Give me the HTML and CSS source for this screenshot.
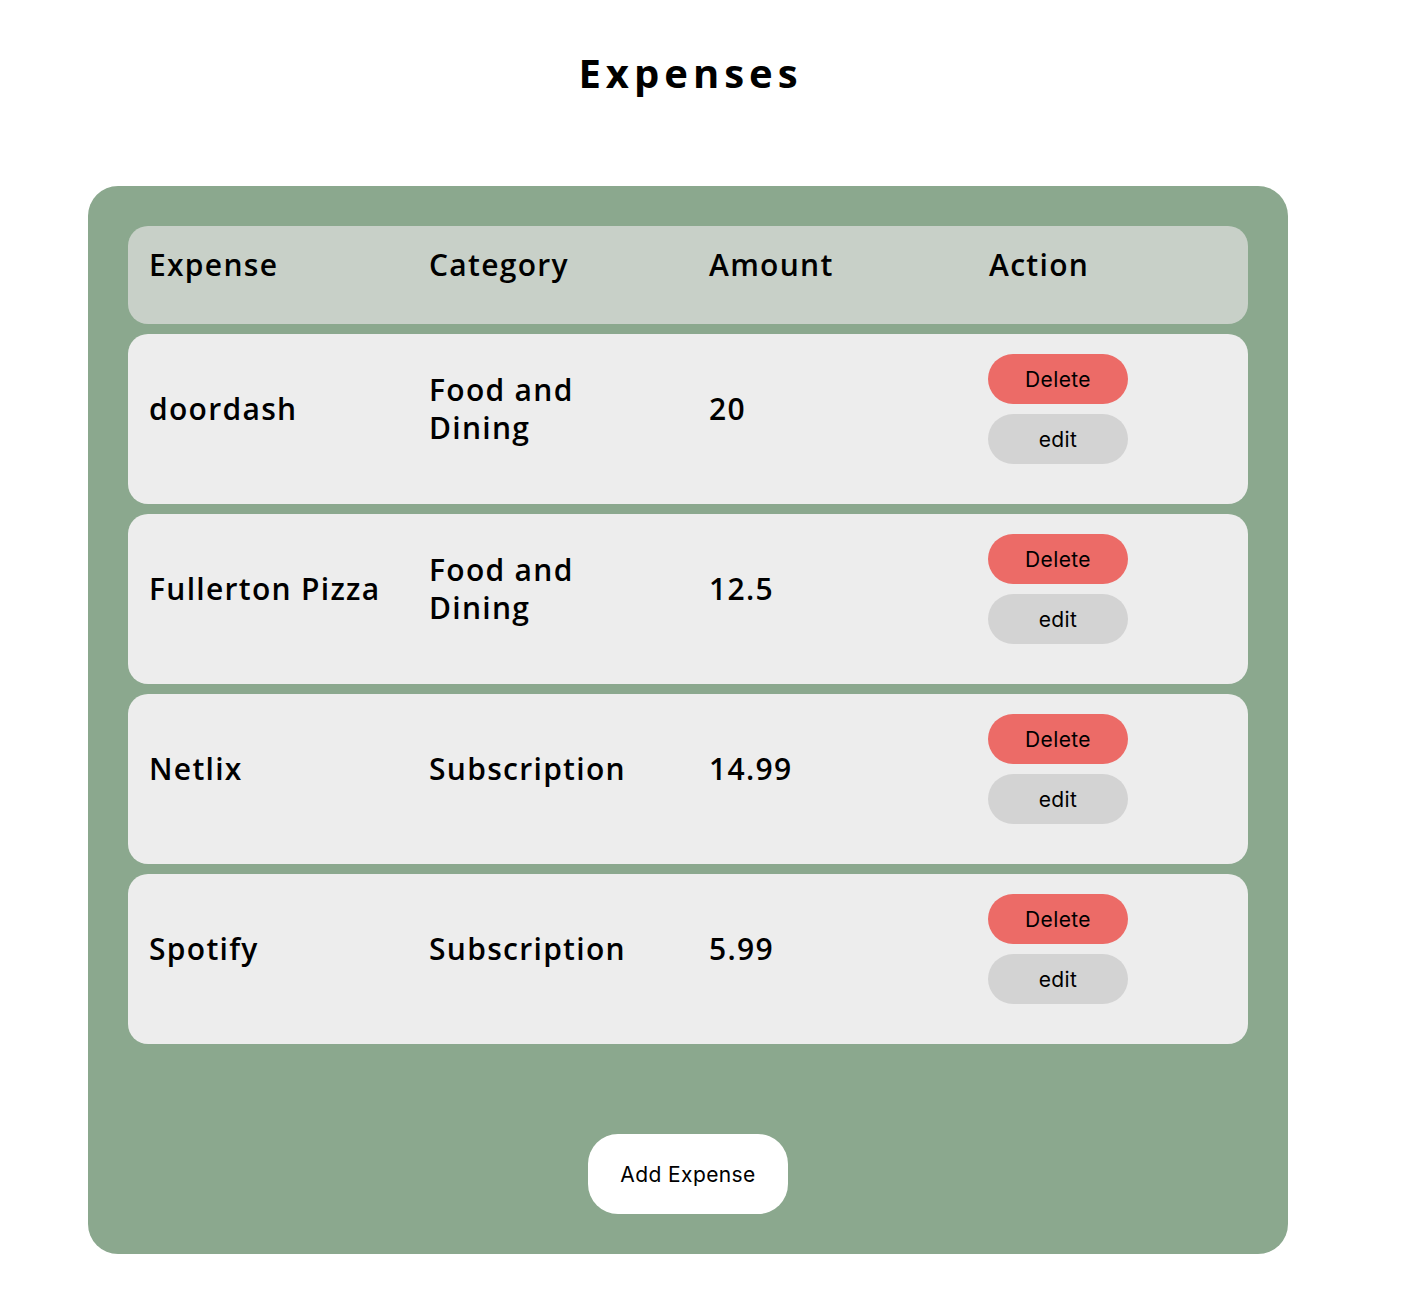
FILE: index.html
```html
<!DOCTYPE html>
<html>
<head>
<meta charset="utf-8">
<title>Expenses</title>
<link rel="stylesheet" href="styles.css">
</head>
<body>
<h1 class="title">Expenses</h1>
<div class="panel">
  <div class="row head">
    <div class="cell">Expense</div>
    <div class="cell">Category</div>
    <div class="cell">Amount</div>
    <div class="cell">Action</div>
  </div>
  <div class="row item">
    <div class="cell">doordash</div>
    <div class="cell">Food and Dining</div>
    <div class="cell">20</div>
    <div class="cell actions"><button class="btn del">Delete</button><button class="btn edit">edit</button></div>
  </div>
  <div class="row item">
    <div class="cell">Fullerton Pizza</div>
    <div class="cell">Food and Dining</div>
    <div class="cell">12.5</div>
    <div class="cell actions"><button class="btn del">Delete</button><button class="btn edit">edit</button></div>
  </div>
  <div class="row item">
    <div class="cell">Netlix</div>
    <div class="cell">Subscription</div>
    <div class="cell">14.99</div>
    <div class="cell actions"><button class="btn del">Delete</button><button class="btn edit">edit</button></div>
  </div>
  <div class="row item">
    <div class="cell">Spotify</div>
    <div class="cell">Subscription</div>
    <div class="cell">5.99</div>
    <div class="cell actions"><button class="btn del">Delete</button><button class="btn edit">edit</button></div>
  </div>
  <div class="footer">
    <button class="add">Add Expense</button>
  </div>
</div>
</body>
</html>
```
FILE: styles.css
```css
html, body {
  margin: 0;
  padding: 0;
  background: #ffffff;
}
body {
  font-family: "Open Sans", "DejaVu Sans", sans-serif;
  color: #000;
  padding-bottom: 62px;
}
.title {
  margin: 0;
  width: 1376px;
  padding-top: 43px;
  height: 186px;
  box-sizing: border-box;
  text-align: center;
  font-size: 40px;
  font-weight: 700;
  line-height: 60px;
  letter-spacing: 5px;
  text-indent: 5px;
}
.panel {
  width: 1200px;
  margin-left: 88px;
  box-sizing: border-box;
  background: #8ba88e;
  border-radius: 30px;
  padding: 40px;
  display: flex;
  flex-direction: column;
  gap: 10px;
}
.row {
  display: grid;
  grid-template-columns: 280px 280px 280px 280px;
  border-radius: 20px;
}
.cell {
  padding: 0 20px 0 21px;
  font-size: 30px;
  font-weight: 600;
  line-height: 38px;
  letter-spacing: 1.3px;
}
.head {
  background: #c8d0c8;
  height: 98px;
  box-sizing: border-box;
  padding-top: 20px;
}
.item {
  background: #ededed;
  height: 170px;
  box-sizing: border-box;
  padding: 20px 0 40px;
  align-items: center;
}
.item .actions {
  display: flex;
  flex-direction: column;
  gap: 10px;
  padding-left: 20px;
}
.btn {
  width: 140px;
  height: 50px;
  border: none;
  border-radius: 25px;
  font-family: "Inter", "Liberation Sans", sans-serif;
  font-size: 21px;
  font-weight: 400;
  letter-spacing: 0.4px;
  color: #000;
  padding: 0;
}
.del {
  background: #ec6b67;
}
.edit {
  background: #d3d3d3;
}
.footer {
  display: flex;
  justify-content: center;
  padding-top: 80px;
}
.add {
  width: 200px;
  height: 80px;
  border: none;
  border-radius: 30px;
  background: #ffffff;
  font-family: "Inter", "Liberation Sans", sans-serif;
  font-size: 21px;
  letter-spacing: 0.4px;
  color: #000;
  padding: 0;
}
```
